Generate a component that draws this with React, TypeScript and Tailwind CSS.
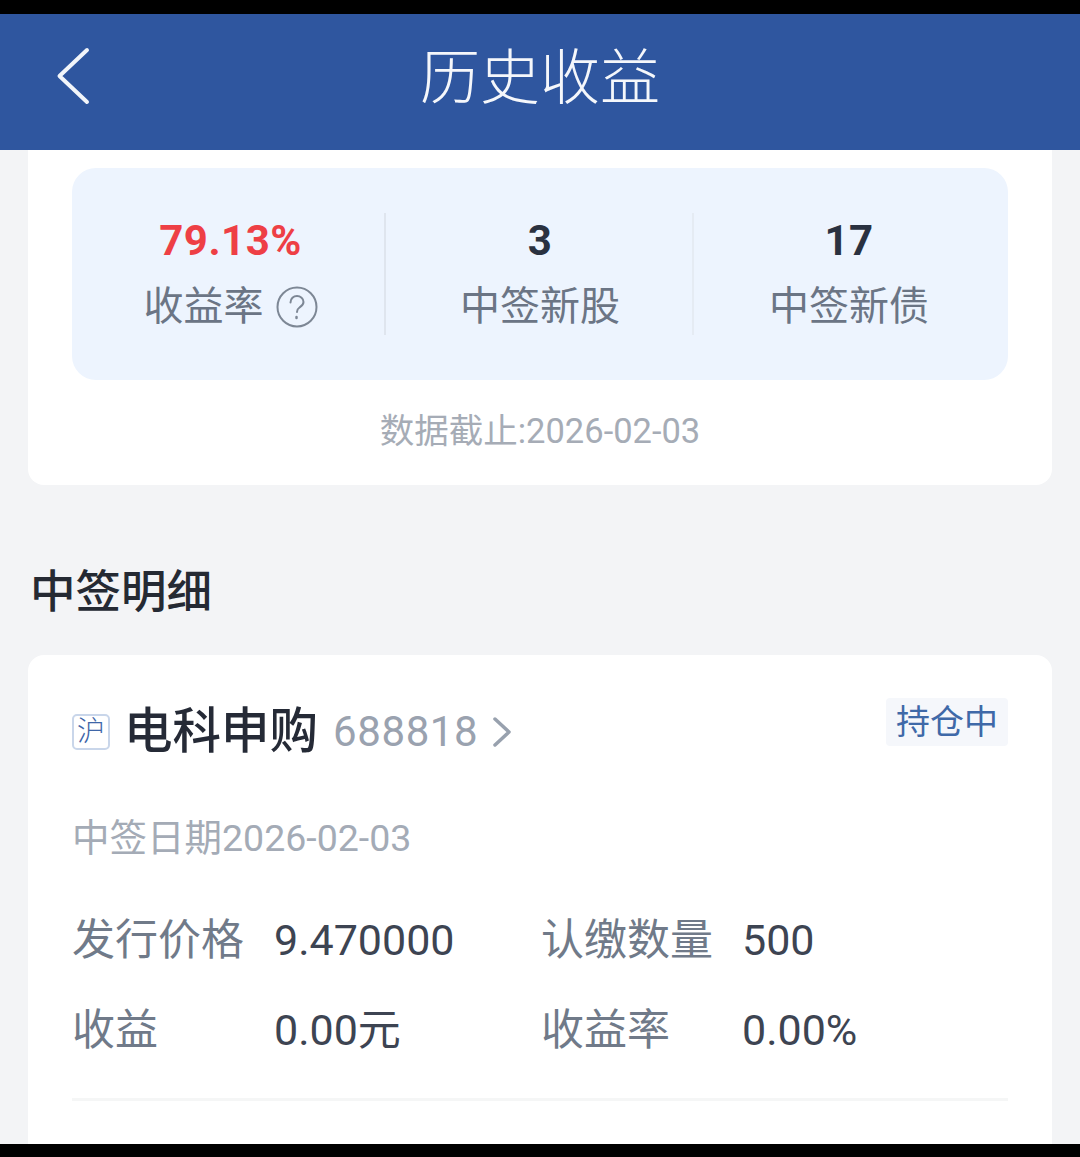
import React from "react";

const FONT = "font-['Roboto','Noto_Sans_CJK_SC',sans-serif]";

const Stat = ({ value, label, red, help, className }: { value: string; label: string; red?: boolean; help?: boolean; className: string }) => (
  <div className={`flex flex-col items-center pb-[2px] ${className}`}>
    <span className={`h-[54px] text-[42px] leading-[54px] font-bold tracking-[0.5px] ${red ? "text-[#ee3f45]" : "text-[#2a3140]"}`}>{value}</span>
    <div className="mt-[14px] flex h-[50px] items-center gap-[12px] text-[40px] leading-[50px] text-[#6b7585]">
      {label}
      {help && (
        <svg width="42" height="42" viewBox="0 0 42 42" fill="none" stroke="#7d8795" strokeWidth="2" strokeLinecap="round">
          <circle cx="21" cy="21" r="19.5" />
          <path d="M14.5 16.5c0-4 3-6.500 6.500-6.500s6.500 2.500 6.500 6c0 3-2 4.200-4 5.500-1.800 1.200-2.500 2-2.500 4.500" />
          <path d="M20.500 31v1" strokeWidth="2.500" />
        </svg>
      )}
    </div>
  </div>
);

const Field = ({ label, value, labelWidth, width }: { label: string; value: string; labelWidth: string; width: string }) => (
  <div className={`flex items-center ${width}`}>
    <span className={`${labelWidth} text-[43px] leading-[56px] text-[#707a89]`}>{label}</span>
    <span className="text-[43px] leading-[56px] text-[#3d4452]">{value}</span>
  </div>
);

export default function App() {
  return (
    <div className={`flex h-[1157px] w-[1080px] flex-col overflow-hidden bg-black ${FONT}`}>
      <div className="relative mt-[14px] flex h-[136px] shrink-0 items-center justify-center bg-[#2f569f] pb-[6px]">
        <svg className="absolute left-[56px] top-[33px]" width="34" height="58" viewBox="0 0 34 58" fill="none" stroke="#f2f5fa" strokeWidth="4" strokeLinecap="round" strokeLinejoin="round">
          <path d="M31 3 3.500 29 31 55" />
        </svg>
        <h1 className="text-[60px] leading-[70px] font-light text-[#f5f7fb]">历史收益</h1>
      </div>

      <div className="h-[994px] shrink-0 overflow-hidden bg-[#f3f4f6] px-[28px]">
        <div className="h-[335px] rounded-b-[16px] bg-white px-[44px] pt-[18px]">
          <div className="flex h-[212px] items-center rounded-[24px] bg-[#edf4fe]">
            <Stat value="79.13%" label="收益率" red help className="w-[312px] pl-[5px]" />
            <div className="h-[122px] w-[2px] bg-[#dfe5ee]" />
            <Stat value="3" label="中签新股" className="w-[306px] pl-[2px]" />
            <div className="h-[122px] w-[2px] bg-[#e5ebf3]" />
            <Stat value="17" label="中签新债" className="flex-1 pr-[4px]" />
          </div>
          <p className="mt-[28px] text-center text-[34.5px] leading-[46px] text-[#a6acb6]">数据截止:2026-02-03</p>
        </div>

        <h2 className="mt-[78px] px-[2px] text-[45.5px] leading-[60px] font-medium text-[#252a33]">中签明细</h2>

        <div className="mt-[32px] h-[500px] rounded-t-[16px] bg-white px-[44px]">
          <div className="flex items-start justify-between pt-[42px]">
            <div className="flex h-[70px] items-center">
              <span className="flex h-[36px] w-[38px] items-center justify-center rounded-[5px] border-2 border-[#c9d6ea] text-[28px] leading-none font-light text-[#3f66a8]">沪</span>
              <span className="ml-[14px] text-[48.5px] leading-[70px] font-medium text-[#252a36]">电科申购</span>
              <span className="ml-[15px] text-[42px] leading-[70px] tracking-[0.6px] text-[#9aa2af]">688818</span>
              <svg className="ml-[14px]" width="20" height="32" viewBox="0 0 20 32" fill="none" stroke="#98a1ae" strokeWidth="3.500" strokeLinecap="round" strokeLinejoin="round">
                <path d="M3 3 17 16 3 29" />
              </svg>
            </div>
            <span className="mt-[1px] h-[48px] rounded-[4px] bg-[#f5f7fb] px-[10px] text-[34px] leading-[48px] text-[#3f69a8]">持仓中</span>
          </div>

          <p className="mt-[46px] text-[37.5px] leading-[50px] text-[#a4abb6]">中签日期2026-02-03</p>

          <div className="mt-[49px] flex">
            <Field label="发行价格" value="9.470000" labelWidth="w-[202px]" width="w-[469px]" />
            <Field label="认缴数量" value="500" labelWidth="w-[201px]" width="w-[466px]" />
          </div>
          <div className="mt-[34px] flex">
            <Field label="收益" value="0.00元" labelWidth="w-[202px]" width="w-[469px]" />
            <Field label="收益率" value="0.00%" labelWidth="w-[201px]" width="w-[466px]" />
          </div>

          <div className="mt-[40px] h-[3px] bg-[#f5f6f6]" />
        </div>
      </div>
    </div>
  );
}
